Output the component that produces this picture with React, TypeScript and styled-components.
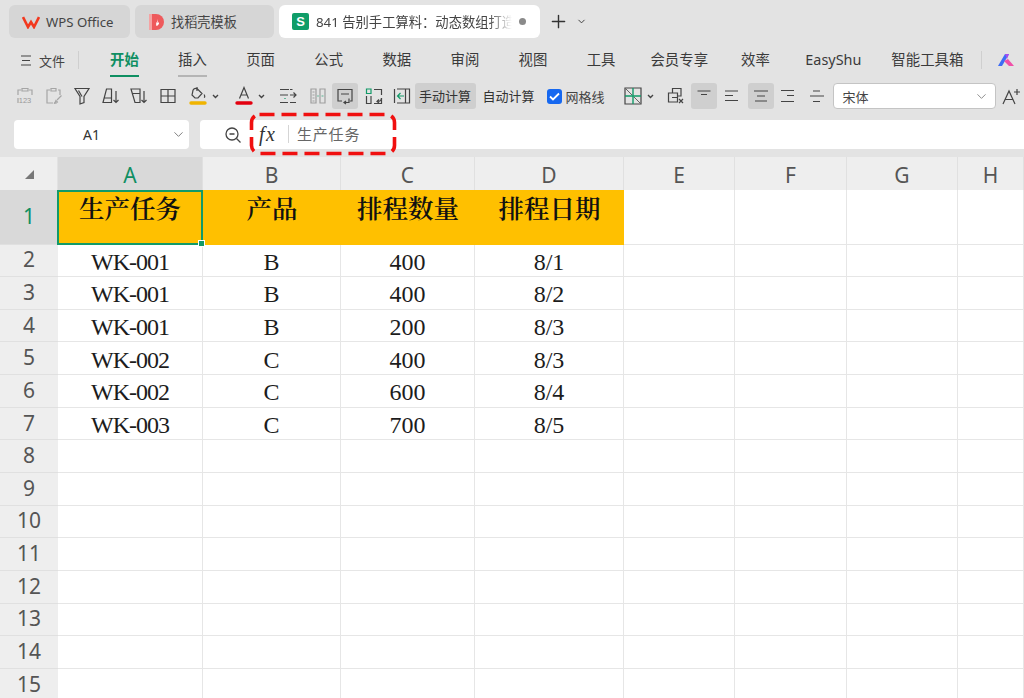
import React from "react";
import styled, { createGlobalStyle } from "styled-components";
import { ChevronDown, Plus } from "lucide-react";

const GlobalStyle = createGlobalStyle`
  html, body { margin: 0; padding: 0; background: #e3e3e3; }
  body { font-family: "Noto Sans CJK SC", "Noto Sans", sans-serif; overflow: hidden; }
  #root { height: 698px; }
`;

const uiFont = `"Noto Sans", "Noto Sans CJK SC", sans-serif`;

const Page = styled.div`
  position: relative;
  width: 1024px;
  height: 698px;
  background: #e3e3e3;
  overflow: hidden;
`;

const TabBar = styled.div`
  display: flex;
  align-items: center;
  height: 33px;
  padding: 5px 0 0 9px;
  gap: 5px;
`;

const Tab = styled.div<{ $w: number; $active?: boolean }>`
  display: flex;
  align-items: center;
  gap: ${(p) => (p.$active ? 7 : 6)}px;
  width: ${(p) => p.$w}px;
  height: 33px;
  box-sizing: border-box;
  padding-left: 13px;
  border-radius: 6px;
  background: ${(p) => (p.$active ? "#ffffff" : "#d6d6d6")};
  color: #444;
  font-size: 13.2px;
  font-family: ${uiFont};
  white-space: nowrap;
  overflow: hidden;
`;

const TabTitle = styled.span`
  width: 196px;
  flex: none;
  overflow: hidden;
  color: #444;
  font-size: 13.3px;
  -webkit-mask-image: linear-gradient(to right, #000 88%, transparent);
  mask-image: linear-gradient(to right, #000 88%, transparent);
`;

const UnsavedDot = styled.span`
  width: 7px;
  height: 7px;
  border-radius: 50%;
  background: #8a8a8a;
  flex: none;
`;

const SheetBadge = styled.span`
  display: flex;
  align-items: center;
  justify-content: center;
  width: 17px;
  height: 17px;
  flex: none;
  border-radius: 2px;
  background: #0f9d68;
  color: #fff;
  font: 700 13px "Liberation Sans", sans-serif;
`;

const NewTab = styled.div`
  display: flex;
  align-items: center;
  margin-left: 3px;
  gap: 7px;
  color: #333;
`;

const MenuBar = styled.div`
  display: flex;
  align-items: center;
  height: 36px;
  margin-top: 4px;
  padding-left: 21px;
  white-space: nowrap;
`;

const FileMenu = styled.div`
  display: flex;
  align-items: center;
  gap: 8px;
  font-size: 13px;
  color: #444;
`;

const MenuDivider = styled.span<{ $ml: number }>`
  width: 1px;
  height: 18px;
  margin-left: ${(p) => p.$ml}px;
  background: #cfcfcf;
  flex: none;
`;

const MenuItems = styled.div`
  display: flex;
  margin-left: 31px;
`;

const MenuItem = styled.div<{ $ml: number; $active?: boolean; $hover?: boolean }>`
  position: relative;
  margin-left: ${(p) => p.$ml}px;
  font-size: 14.4px;
  line-height: 36px;
  font-family: ${uiFont};
  font-weight: ${(p) => (p.$active ? 700 : 400)};
  color: ${(p) => (p.$active ? "#0f8f62" : "#3a3a3a")};
  &::after {
    content: "";
    display: ${(p) => (p.$active || p.$hover ? "block" : "none")};
    position: absolute;
    left: 0;
    right: 0;
    bottom: 1px;
    height: 2px;
    background: ${(p) => (p.$active ? "#0f8f62" : "#b5b5b5")};
  }
`;

const Toolbar = styled.div`
  display: flex;
  align-items: center;
  height: 28px;
  margin-top: 4px;
  padding-left: 12px;
  white-space: nowrap;
`;

const IconButton = styled.div<{ $w?: number; $ml?: number; $active?: boolean; $dim?: boolean }>`
  display: flex;
  align-items: center;
  justify-content: ${(p) => (p.$w ? "flex-start" : "center")};
  width: ${(p) => p.$w ?? 26}px;
  height: 26px;
  flex: none;
  margin-left: ${(p) => p.$ml ?? 2.5}px;
  border-radius: 3px;
  background: ${(p) => (p.$active ? "#cfcfcf" : "transparent")};
  opacity: ${(p) => (p.$dim ? 0.55 : 1)};
`;

const CaretSlot = styled.span`
  display: flex;
  margin-left: 5px;
`;

const TextButton = styled.div<{ $ml: number; $active?: boolean }>`
  height: 26px;
  line-height: 26px;
  margin-left: ${(p) => p.$ml}px;
  padding: 0 4.5px;
  border-radius: 3px;
  font-size: 13px;
  color: #333;
  background: ${(p) => (p.$active ? "#cfcfcf" : "transparent")};
`;

const GridLineToggle = styled.div`
  display: flex;
  align-items: center;
  gap: 4px;
  margin-left: 7.5px;
  font-size: 13px;
  color: #444;
`;

const CheckBox = styled.span`
  display: flex;
  align-items: center;
  justify-content: center;
  width: 15px;
  height: 15px;
  border-radius: 3px;
  background: #1668f0;
`;

const FontSelect = styled.div`
  display: flex;
  align-items: center;
  justify-content: space-between;
  box-sizing: border-box;
  width: 164px;
  height: 26px;
  margin-left: 3px;
  padding: 0 6px 0 9px;
  border: 1px solid #c4c4c4;
  border-radius: 4px;
  background: #fff;
  font-size: 13px;
  color: #444;
`;

const FormulaRow = styled.div`
  display: flex;
  height: 29px;
  margin-top: 10px;
  padding-left: 14px;
  gap: 11px;
`;

const NameBox = styled.div`
  display: flex;
  align-items: center;
  position: relative;
  justify-content: center;
  width: 175px;
  box-sizing: border-box;
  padding-right: 20px;
  border-radius: 4px;
  background: #fff;
  font: 14px ${uiFont};
  color: #333;
`;

const NameChevron = styled.span`
  position: absolute;
  right: 3px;
  top: 7px;
  color: #777;
  display: flex;
`;

const FormulaBox = styled.div`
  display: flex;
  align-items: center;
  flex: 1;
  padding-left: 24px;
  border-radius: 4px 0 0 4px;
  background: #fff;
`;

const FxMark = styled.span`
  margin-left: 17px;
  width: 29px;
  font: italic 20px "Liberation Serif", serif;
  letter-spacing: 1.5px;
  color: #333;
`;

const FormulaText = styled.span`
  margin-top: -1px;
  padding-left: 8px;
  border-left: 1px solid #d5d5d5;
  line-height: 18px;
  font-size: 15px;
  letter-spacing: 0.8px;
  color: #666;
`;

const Sheet = styled.div`
  display: grid;
  grid-template-columns: 58px 145px 138px 134px 149px 111px 112px 111px 66px;
  grid-template-rows: 33px 54.5px repeat(14, 32.65px);
  margin-top: 8px;
  height: 541px;
  background: #fff;
  overflow: hidden;
  position: relative;
`;

const Corner = styled.div`
  position: relative;
  background: #eeeeee;
  border-right: 1px solid #e2e2e2;
  &::after {
    content: "";
    position: absolute;
    left: 25px;
    top: 13px;
    border-style: solid;
    border-width: 0 0 9px 9px;
    border-color: transparent transparent #777 transparent;
  }
`;

const ColHead = styled.div<{ $sel?: boolean }>`
  display: flex;
  align-items: center;
  justify-content: center;
  box-sizing: border-box;
  padding-top: 3px;
  border-right: 1px solid #e0e0e0;
  background: ${(p) => (p.$sel ? "#d9d9d9" : "#eeeeee")};
  color: ${(p) => (p.$sel ? "#0f8f62" : "#555")};
  font: 21px ${uiFont};
`;

const RowHead = styled.div<{ $sel?: boolean }>`
  display: flex;
  align-items: center;
  justify-content: center;
  box-sizing: border-box;
  padding-bottom: 2px;
  border-bottom: 1px solid #e0e0e0;
  background: ${(p) => (p.$sel ? "#d9d9d9" : "#eeeeee")};
  color: ${(p) => (p.$sel ? "#0f8f62" : "#555")};
  font: 21px ${uiFont};
`;

const Cell = styled.div<{ $tight?: boolean }>`
  display: flex;
  align-items: center;
  justify-content: center;
  box-sizing: border-box;
  padding-top: 4px;
  border-right: 1px solid #e6e6e6;
  border-bottom: 1px solid #e6e6e6;
  color: #1c1c1c;
  letter-spacing: ${(p) => (p.$tight ? -1 : 0)}px;
  font: 24px "Liberation Serif", "Noto Sans CJK SC", serif;
`;

const HeaderCell = styled.div<{ $sel?: boolean }>`
  position: relative;
  display: flex;
  justify-content: center;
  box-sizing: border-box;
  padding-top: ${(p) => (p.$sel ? 0 : 2)}px;
  background: #ffc000;
  color: #111;
  font: 600 25.5px/30px "Noto Serif CJK SC", "Noto Sans CJK SC", serif;
  ${(p) =>
    p.$sel &&
    `
    z-index: 2;
    margin: 0 0 0 -1px;
    border: 2px solid #129a68;
  `}
`;

const FillHandle = styled.span`
  position: absolute;
  right: -4px;
  bottom: -4px;
  width: 5px;
  height: 5px;
  border: 1px solid #fff;
  background: #129a68;
`;

const CalloutFrame = styled.svg`
  position: absolute;
  left: 248px;
  top: 111px;
`;

const Ico: React.FC<{ children: React.ReactNode; w?: number; c?: string }> = ({ children, w = 18, c = "#444" }) => (
  <svg width={w} height="18" viewBox={`0 0 ${w} 18`} fill="none" stroke={c} strokeWidth="1.2" style={{ flex: "none" }}>
    {children}
  </svg>
);

const Caret = () => (
  <svg width="7" height="5" viewBox="0 0 7 5" style={{ flex: "none" }}>
    <path d="M1 1l2.5 2.5L6 1" fill="none" stroke="#444" strokeWidth="1.4" />
  </svg>
);

const WpsLogo = () => (
  <svg width="18" height="14" viewBox="0 0 18 14" style={{ flex: "none" }}>
    <path d="M1 2l5 10 3-5 3 5 5-10" fill="none" stroke="#f2391f" strokeWidth="2.6" />
  </svg>
);

const DocerLogo = () => (
  <svg width="17" height="18" viewBox="0 0 17 18" style={{ flex: "none" }}>
    <path d="M1 1h7a8 8 0 0 1 0 16H1z" fill="#ee5a5c" />
    <path d="M1 1h3v16H1z" fill="#f5a3a3" />
    <path d="M9 5c1 2 .5 3-.5 4.500C8 10.500 8 12 8.500 13c1.500-.5 3-2 2.500-4-.5.500-1 1-1.500 1 .5-1.500.5-3.500-.5-5z" fill="#fff" />
  </svg>
);

const KdocsLogo = () => (
  <svg width="18" height="16" viewBox="0 0 18 16" style={{ flex: "none" }}>
    <path d="M1 14L8 2h4L5 14z" fill="#3d6cf5" />
    <path d="M8 2h4l-2 5z" fill="#a64cf0" />
    <path d="M7 9l4-2 6 7h-5z" fill="#f04fa8" />
  </svg>
);

const tabs: [string, number][] = [
  ["开始", 0],
  ["插入", 39.3],
  ["页面", 39.3],
  ["公式", 39.3],
  ["数据", 39.3],
  ["审阅", 39.3],
  ["视图", 39.3],
  ["工具", 39.3],
  ["会员专享", 35],
  ["效率", 33],
  ["EasyShu", 35.5],
  ["智能工具箱", 30],
];

const cols = ["A", "B", "C", "D", "E", "F", "G", "H"];

const rows = [
  ["WK-001", "B", "400", "8/1"],
  ["WK-001", "B", "400", "8/2"],
  ["WK-001", "B", "200", "8/3"],
  ["WK-002", "C", "400", "8/3"],
  ["WK-002", "C", "600", "8/4"],
  ["WK-003", "C", "700", "8/5"],
];

const headers = ["生产任务", "产品", "排程数量", "排程日期"];

const Clipboard123 = () => (
  <Ico c="#a5a5a5">
    <path d="M5 3H2v5M2 11v5M13 3h3v5M6 1.500h6V4H6z" />
    <text x="9" y="16" textAnchor="middle" fontSize="7.5" fontFamily="Liberation Sans" fill="#999" stroke="none">123</text>
  </Ico>
);
const ClipboardBrush = () => (
  <Ico c="#a5a5a5">
    <path d="M5 3H2v13h6M13 3h2v5M6 1.500h5V4H6z" />
    <path d="M16.500 8.500l-4.500 4.500M11 13.500c-.5 1.500-1 2.500-2 3 1.500 0 3-.5 3.500-1.500z" />
  </Ico>
);
const Filter = () => (
  <Ico>
    <path d="M2 1.500h14l-5 8V15.500l-4 1.500V9.500z" />
    <path d="M5.500 3.500l3.500 6" />
  </Ico>
);
const SortAsc = () => (
  <Ico>
    <path d="M1 15.500L4.500 2h5v13.500zM2.500 11h7" />
    <path d="M14 4v11.500M11.500 13l2.500 2.500 2.500-2.500" />
  </Ico>
);
const SortDesc = () => (
  <Ico>
    <path d="M1 2h9v13.500H5zM2 6.500h8" />
    <path d="M14 4v11.500M11.500 13l2.500 2.500 2.500-2.500" />
  </Ico>
);
const Borders = () => (
  <Ico>
    <path d="M2 2.500h14v13H2zM2 9h14M9 2.500v13" />
  </Ico>
);
const FillColor = () => (
  <svg width="18" height="20" viewBox="0 0 18 20" fill="none" stroke="#444" strokeWidth="1.2" style={{ flex: "none" }}>
    <path d="M4 4.500C4 2.500 7 2 8.500 3L13 7.500 9 12H6L3 9z" />
    <path d="M8 1v4M15 8.500c1 1.500 1 2.500 0 3" />
    <path d="M2 17h14" stroke="#f0b400" strokeWidth="3.400" strokeLinecap="round" />
  </svg>
);
const FontColor = () => (
  <svg width="18" height="20" viewBox="0 0 18 20" fill="none" stroke="#444" strokeWidth="1.2" style={{ flex: "none" }}>
    <path d="M4.500 12.500L9 1.500l4.500 11M6 9h6" />
    <path d="M2 17h14" stroke="#e3000f" strokeWidth="3.400" strokeLinecap="round" />
  </svg>
);
const WrapLines = () => (
  <Ico>
    <path d="M1 2.500h9M1 8h8M1 15.500h8M11 2.500h2.500M11 15.500h6" />
    <path d="M11 8h6M14.500 5.500L17 8l-2.500 2.500" />
    <path d="M6 12v-1" stroke="#129a68" />
  </Ico>
);
const MergeSplit = () => (
  <Ico c="#666">
    <path d="M2 2h5v14H2zM11 2h5v14h-5z" />
    <path d="M3.500 5h2M3.500 8h2M3.500 11h2M3.500 14h2" />
    <path d="M8 9h2" stroke="#129a68" />
    <path d="M12.500 9h2" stroke="#129a68" />
  </Ico>
);
const WrapBox = () => (
  <Ico>
    <path d="M6 14H2V2.500h14V14h-2" />
    <path d="M5 7h8M8 15.500h5v-4M10 14l-2 1.500 2 1.500" />
  </Ico>
);
const SwapBox = () => (
  <Ico>
    <path d="M1.500 2h4.500v4.500H1.500z" stroke="#129a68" />
    <path d="M1.500 9v7.500H6V9M9 2.500h7.500V8M16.500 11v5.500H9" />
    <path d="M16.500 11c0 2.500-1.500 3.500-4 3.500M14 12.500l-2 2 2 1.500" />
  </Ico>
);
const ArrowBox = () => (
  <Ico>
    <path d="M1.500 2v14M4 2h12.500v14H4M12.500 2v14" />
    <path d="M11 9H4.500M7.500 6L4.500 9l3 3" stroke="#129a68" />
  </Ico>
);
const FreezeGrid = () => (
  <Ico>
    <path d="M1 1h16v16H1z" />
    <path d="M2 2l6 6M10 10l6 6" strokeWidth="0.8" />
    <path d="M9 1v16M1 9h16" stroke="#129a68" strokeWidth="1.400" />
  </Ico>
);
const ClearBox = () => (
  <Ico>
    <path d="M1.500 6h9v9h-9zM5.500 6V1.500h8.500V9h-3.500M5 10.500h5" />
    <path d="M12 12l4 4M16 12l-4 4" />
  </Ico>
);
const AlignLines: React.FC<{ kind: string }> = ({ kind }) => {
  const d: Record<string, string> = {
    top: "M2.500 4h13M6 7.500h6",
    left: "M2 4h13M2 8.500h8M2 13.500h13",
    center: "M2 4h14M5 9h8M3 14h12",
    middle: "M2 3.500h13M8 8.500h7M2 14.500h13",
    bottom: "M5 4h7M2 9h14M5 14.500h7",
  };
  return (
    <Ico>
      <path d={d[kind]} />
    </Ico>
  );
};

const Zoom = () => (
  <svg width="18" height="18" viewBox="0 0 18 18" fill="none" stroke="#444" strokeWidth="1.3">
    <circle cx="8" cy="8" r="6" />
    <path d="M5.500 8h5M12.500 12.500l4 4" />
  </svg>
);

export default function App() {
  return (
    <Page>
      <GlobalStyle />
      <TabBar>
        <Tab $w={121}>
          <WpsLogo />
          WPS Office
        </Tab>
        <Tab $w={139}>
          <DocerLogo />
          找稻壳模板
        </Tab>
        <Tab $w={261} $active>
          <SheetBadge>S</SheetBadge>
          <TabTitle>841 告别手工算料：动态数组打造</TabTitle>
          <UnsavedDot />
        </Tab>
        <NewTab>
          <Plus size={21} strokeWidth={1.6} />
          <ChevronDown size={11} />
        </NewTab>
      </TabBar>

      <MenuBar>
        <FileMenu>
          <svg width="10" height="11" viewBox="0 0 10 11" fill="none" stroke="#444" strokeWidth="1.1">
            <path d="M0 1h10M1 5.500h8M0 10h10" />
          </svg>
          文件
        </FileMenu>
        <MenuDivider $ml={13} />
        <MenuItems>
          {tabs.map(([t, ml], i) => (
            <MenuItem key={t} $ml={ml} $active={i === 0} $hover={i === 1}>
              {t}
            </MenuItem>
          ))}
        </MenuItems>
        <MenuDivider $ml={18} />
        <IconButton $ml={11}>
          <KdocsLogo />
        </IconButton>
      </MenuBar>

      <Toolbar>
        <IconButton $ml={0}><Clipboard123 /></IconButton>
        <IconButton><ClipboardBrush /></IconButton>
        <IconButton><Filter /></IconButton>
        <IconButton><SortAsc /></IconButton>
        <IconButton><SortDesc /></IconButton>
        <IconButton><Borders /></IconButton>
        <IconButton $w={36} $ml={8}>
          <FillColor />
          <CaretSlot><Caret /></CaretSlot>
        </IconButton>
        <IconButton $w={36} $ml={10}>
          <FontColor />
          <CaretSlot><Caret /></CaretSlot>
        </IconButton>
        <IconButton $ml={4}><WrapLines /></IconButton>
        <IconButton $ml={4} $dim><MergeSplit /></IconButton>
        <IconButton $ml={1} $active><WrapBox /></IconButton>
        <IconButton $ml={3}><SwapBox /></IconButton>
        <IconButton $ml={2}><ArrowBox /></IconButton>
        <TextButton $ml={0} $active>手动计算</TextButton>
        <TextButton $ml={2.5}>自动计算</TextButton>
        <GridLineToggle>
          <CheckBox>
            <svg width="11" height="9" viewBox="0 0 11 9" fill="none" stroke="#fff" strokeWidth="1.8">
              <path d="M1 4.500l3 3 6-6" />
            </svg>
          </CheckBox>
          网格线
        </GridLineToggle>
        <IconButton $w={34} $ml={19}>
          <FreezeGrid />
          <CaretSlot><Caret /></CaretSlot>
        </IconButton>
        <IconButton $ml={5}><ClearBox /></IconButton>
        <IconButton $ml={2} $active><AlignLines kind="top" /></IconButton>
        <IconButton $ml={2}><AlignLines kind="left" /></IconButton>
        <IconButton $ml={3} $active><AlignLines kind="center" /></IconButton>
        <IconButton $ml={1.5}><AlignLines kind="middle" /></IconButton>
        <IconButton $ml={2.5}><AlignLines kind="bottom" /></IconButton>
        <FontSelect>
          宋体
          <ChevronDown size={15} color="#888" strokeWidth={1.5} />
        </FontSelect>
        <IconButton $ml={2}>
          <svg width="20" height="18" viewBox="0 0 20 18" fill="none" stroke="#444" strokeWidth="1.2">
            <path d="M2 17L8 4l6 13M4.500 12.500h7M13 5h6M16 2v6" />
          </svg>
        </IconButton>
      </Toolbar>

      <FormulaRow>
        <NameBox>
          A1
          <NameChevron><ChevronDown size={15} strokeWidth={1.5} /></NameChevron>
        </NameBox>
        <FormulaBox>
          <Zoom />
          <FxMark>fx</FxMark>
          <FormulaText>生产任务</FormulaText>
        </FormulaBox>
      </FormulaRow>

      <Sheet>
        <Corner />
        {cols.map((c, i) => (
          <ColHead key={c} $sel={i === 0}>{c}</ColHead>
        ))}
        <RowHead $sel>1</RowHead>
        {headers.map((h, i) => (
          <HeaderCell key={h} $sel={i === 0}>
            {h}
            {i === 0 && <FillHandle />}
          </HeaderCell>
        ))}
        {cols.slice(4).map((c) => (
          <Cell key={c} />
        ))}
        {Array.from({ length: 14 }, (_, r) => (
          <React.Fragment key={r}>
            <RowHead>{r + 2}</RowHead>
            {cols.map((_c, c) => (
              <Cell key={c} $tight={c === 0}>{rows[r]?.[c] ?? ""}</Cell>
            ))}
          </React.Fragment>
        ))}
      </Sheet>

      <CalloutFrame width="150" height="46" viewBox="0 0 150 46" fill="none">
        <rect x="3.500" y="3.500" width="143" height="39" rx="8" stroke="#f01010" strokeWidth="3.600" strokeDasharray="15 7" />
      </CalloutFrame>
    </Page>
  );
}
